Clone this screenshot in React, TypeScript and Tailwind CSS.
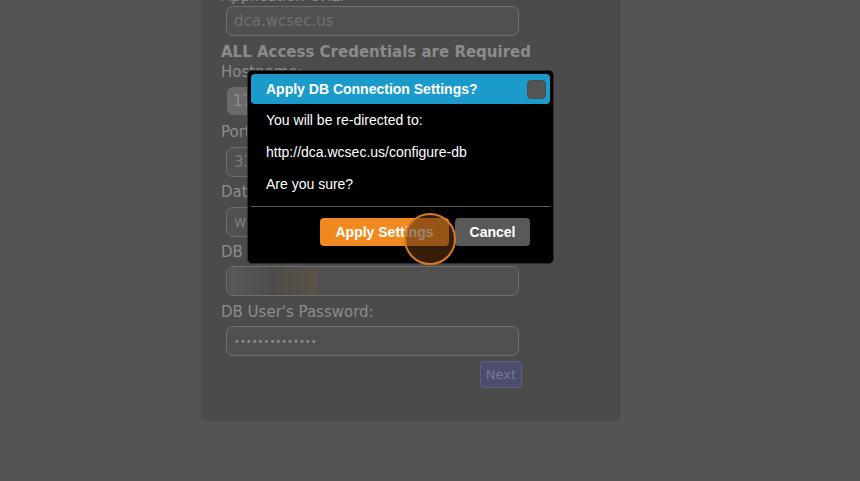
export default function App() {
  const label = 'text-[15px] leading-[20px] text-[#8b8b8b]';
  const input =
    'h-[30px] w-[293px] ml-[5px] rounded-[7px] border border-[#6e6e6e] bg-[#505050] px-[7px] flex items-center';

  return (
    <div className="relative h-[481px] w-[860px] overflow-hidden bg-[#535453] font-['DejaVu_Sans',sans-serif]">
      <div className="ml-[201px] mt-[-40px] h-[461px] w-[420px] rounded-b-[6px] bg-[#4b4b4b] pl-[20px] pt-[26px]">
        <div className={label}>Application URL:</div>
        <div className={input}>
          <span className="text-[15px] text-[#6f6f6f]">dca.wcsec.us</span>
        </div>
        <div className="mt-[6px] text-[15px] font-bold leading-[20px] text-[#8b8b8b]">
          ALL Access Credentials are Required
        </div>
        <div className={label}>Hostname:</div>
        <div className="ml-[6px] mt-[5px] flex h-[28px] w-[293px] items-center rounded-[6px] bg-[#6a6a6a] px-[6px]">
          <span className="text-[15px] text-[#8d8d8d]">17</span>
        </div>
        <div className={`${label} mt-[7px]`}>Port:</div>
        <div className={`${input} mt-[5px]`}>
          <span className="text-[15px] text-[#7a7a7a]">33</span>
        </div>
        <div className={`${label} mt-[5px]`}>Database:</div>
        <div className={`${input} mt-[5px]`}>
          <span className="text-[15px] text-[#7a7a7a]">wc</span>
        </div>
        <div className={`${label} mt-[5px]`}>DB User:</div>
        <div className={`${input} mt-[4px] overflow-hidden !pl-[2px]`}>
          <div className="h-[28px] w-[89px] bg-gradient-to-r from-[#5a5a5a] via-[#4e4c4a] to-[#5a5248] blur-[1px]" />
        </div>
        <div className={`${label} mt-[6px]`}>DB User's Password:</div>
        <div className={`${input} mt-[4px]`}>
          <span className="text-[10px] text-[#8a8a8a]">••••••••••••••</span>
        </div>
        <div className="flex w-[301px] justify-end pt-[5px]">
          <div className="flex h-[27px] items-center rounded-[4px] border border-[#5d5e86] bg-[#4c4d6c] px-[5px] text-[13px] text-[#77789a]">
            Next
          </div>
        </div>
      </div>

      <div className="absolute left-[247px] top-[70px] w-[307px] rounded-[5px] border border-[#2e2e2e] bg-black p-[3px] font-['Liberation_Sans',Arial,sans-serif]">
        <div className="flex h-[30px] items-center justify-between rounded-[4px] bg-[#1b9bc9] pl-[15px] pr-[4px]">
          <span className="text-[14px] font-bold text-white">Apply DB Connection Settings?</span>
          <span className="h-[19px] w-[19px] rounded-[4px] border border-[#4a4a4a] bg-[#555555]" />
        </div>
        <div className="px-[15px] text-[14px] leading-[16px] text-white">
          <p className="py-[8px]">You will be re-directed to:</p>
          <p className="py-[8px]">http://dca.wcsec.us/configure-db</p>
          <p className="py-[8px]">Are you sure?</p>
        </div>
        <div className="mt-[6px] border-t border-[#5a5a5a]" />
        <div className="flex justify-end gap-[6px] pb-[14px] pr-[20px] pt-[11px]">
          <button className="h-[28px] w-[129px] rounded-[4px] bg-[#f08a1f] text-[14px] font-bold text-white">
            Apply Settings
          </button>
          <button className="h-[28px] w-[75px] rounded-[4px] bg-[#595959] text-[14px] font-bold text-white">
            Cancel
          </button>
        </div>
      </div>

      <div className="absolute left-[404px] top-[213px] h-[52px] w-[52px] rounded-full border-[2px] border-[#d77a22] bg-[#5a3010]/60" />
    </div>
  );
}
